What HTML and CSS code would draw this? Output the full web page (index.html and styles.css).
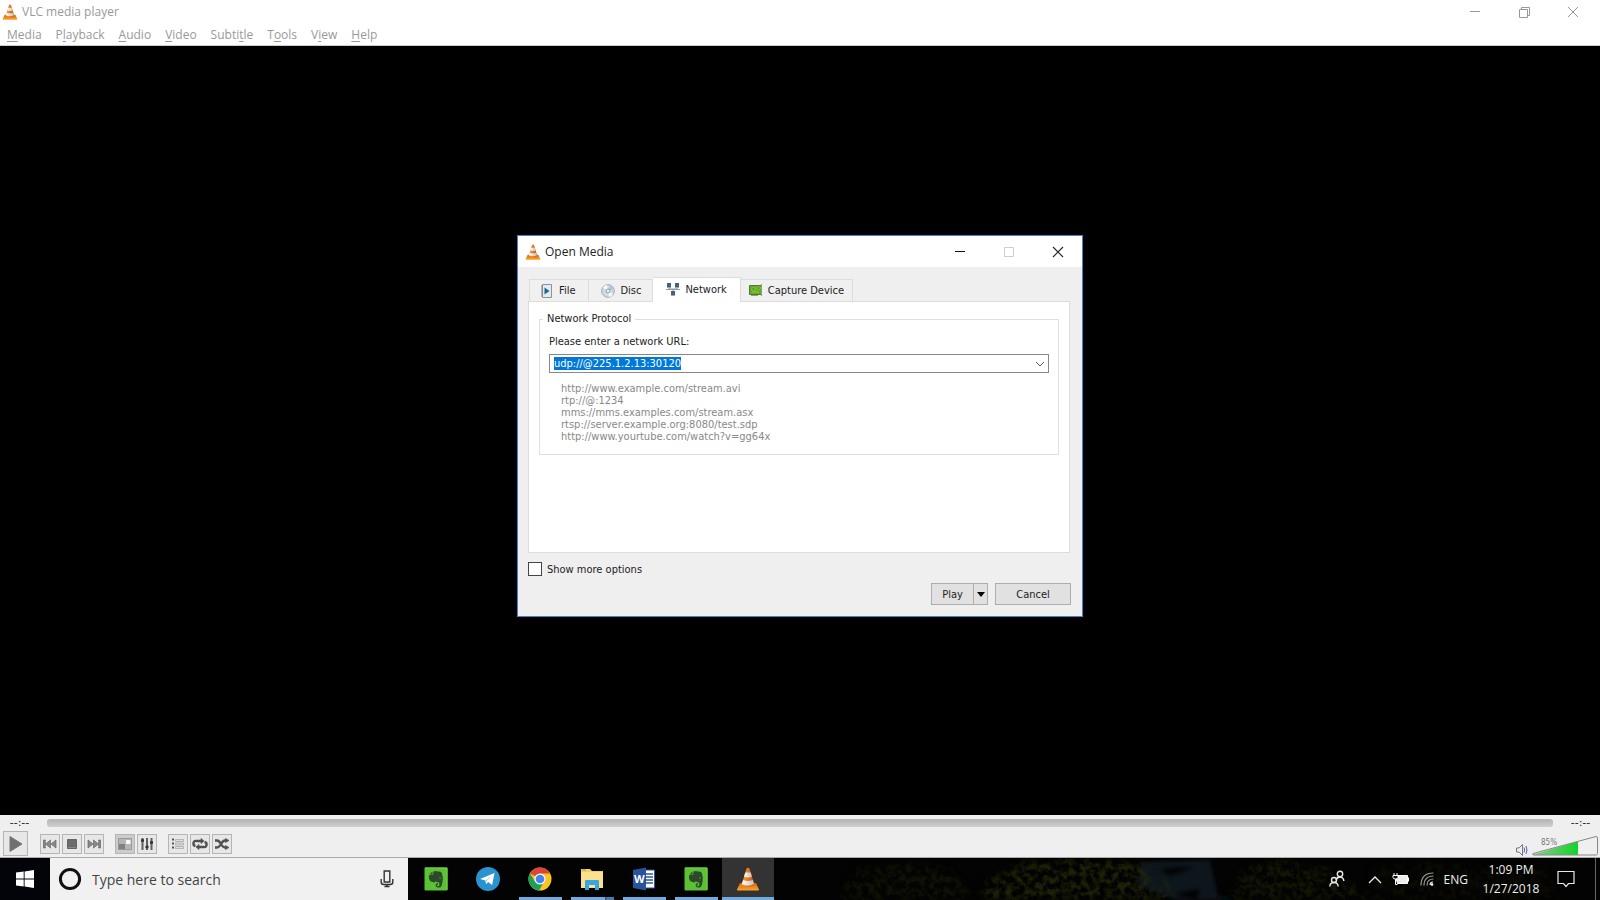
FILE: index.html
```html
<!DOCTYPE html>
<html lang="en">
<head>
<meta charset="utf-8">
<title>VLC media player</title>
<link rel="stylesheet" href="styles.css">
</head>
<body>
<svg class="defs" aria-hidden="true">
  <defs>
    <linearGradient id="orange" x1="0" x2="1" y1="0" y2="0">
      <stop offset="0" stop-color="#f8a13a"/><stop offset=".5" stop-color="#e87a10"/><stop offset="1" stop-color="#b9560a"/>
    </linearGradient>
    <linearGradient id="base" x1="0" x2="0" y1="0" y2="1">
      <stop offset="0" stop-color="#d9640a"/><stop offset="1" stop-color="#fba52c"/>
    </linearGradient>
    <linearGradient id="white" x1="0" x2="1" y1="0" y2="0">
      <stop offset="0" stop-color="#ffffff"/><stop offset="1" stop-color="#bdbdbd"/>
    </linearGradient>
    <linearGradient id="green" x1="0" x2="1" y1="0" y2="0">
      <stop offset="0" stop-color="#8ec98e"/><stop offset="1" stop-color="#12d42a"/>
    </linearGradient>
    <symbol id="cone" viewBox="0 0 24 24">
      <path d="M4 16h16l3 6.500q.2 1-1 1H2q-1.200 0-1-1z" fill="url(#base)"/>
      <path d="M10.500 1.500Q12 .2 13.500 1.500L18.500 18q-6.500 3.500-13 0z" fill="url(#orange)"/>
      <path d="M9.300 5.500h5.400l1.300 4.200q-4 1.600-8 0z" fill="url(#white)"/>
      <path d="M7.100 13q4.900 1.800 9.800 0l1.200 4q-6.100 3-12.200 0z" fill="url(#white)"/>
    </symbol>
    <symbol id="elephant" viewBox="0 0 24 24">
      <rect x=".5" y=".5" width="23" height="23" rx="1" fill="#5ac234"/>
      <path d="M1 1h22v22" fill="none" stroke="#7bd04a"/>
      <path d="M9.500 4.500Q12 3.300 14 4.600q3.200 0 3.900 1.300 1.400 4.600.6 9-.4 3.600-1.700 5-1.300 1-3.300.5-2.200-.6-1.900-2.600.4-1.800 2.300-1.700v1.700q-.9-.1-1 .7.200.8 1.300.7 1.300-.2 1.200-2.200-.1-1.500-1.300-1.700-1.500 0-2.200-1-.4 1.200-1.900 1.100-2.700-.2-4-1.600Q4.800 12.200 4.900 9q.1-.9 1.100-.9h2.400q.8 0 .8-.8z" fill="#2c4a2b"/>
      <path d="M5.500 7.400 8.500 4.500v2.900z" fill="#2c4a2b"/>
      <path d="M14.700 11.100q1.700-1.400 2.300.6-1.100-.5-2.300-.6z" fill="#6fc53f"/>
    </symbol>
  </defs>
</svg>

<div class="app">
  <header class="titlebar">
    <svg class="cone-small"><use href="#cone"/></svg>
    <h1 class="app-title">VLC media player</h1>
    <div class="window-buttons">
      <button class="win-btn" type="button" aria-label="Minimize"><svg width="12" height="12"><path d="M1 5.500h10" stroke="#999"/></svg></button>
      <button class="win-btn" type="button" aria-label="Restore"><svg width="12" height="12" fill="none" stroke="#999"><path d="M1.500 3.500h8v8h-8zM3.500 3V1.500h8v8H10"/></svg></button>
      <button class="win-btn" type="button" aria-label="Close"><svg width="12" height="12"><path d="M1 1l10 10M11 1L1 11" stroke="#999"/></svg></button>
    </div>
  </header>

  <nav class="menubar">
    <a href="#"><u>M</u>edia</a>
    <a href="#">P<u>l</u>ayback</a>
    <a href="#"><u>A</u>udio</a>
    <a href="#"><u>V</u>ideo</a>
    <a href="#">Subti<u>t</u>le</a>
    <a href="#">T<u>o</u>ols</a>
    <a href="#">V<u>i</u>ew</a>
    <a href="#"><u>H</u>elp</a>
  </nav>

  <main class="video">
    <section class="dialog" role="dialog" aria-labelledby="dlg-title">
      <header class="dialog-title">
        <svg class="cone-medium"><use href="#cone"/></svg>
        <h2 id="dlg-title">Open Media</h2>
        <div class="window-buttons dialog-buttons">
          <button class="win-btn" type="button" aria-label="Minimize"><svg width="12" height="12"><path d="M1 5.500h10" stroke="#111"/></svg></button>
          <button class="win-btn" type="button" aria-label="Maximize" disabled><svg width="12" height="12"><path d="M1.500 1.500h9v9h-9z" fill="none" stroke="#ccc"/></svg></button>
          <button class="win-btn" type="button" aria-label="Close"><svg width="12" height="12"><path d="M1 1l10 10M11 1L1 11" stroke="#222" stroke-width="1.100"/></svg></button>
        </div>
      </header>

      <div class="dialog-body">
        <div class="tabs" role="tablist">
          <button class="tab" role="tab" type="button">
            <svg width="14" height="14"><path d="M2.500.5h9v13h-9z" fill="#e4ebf0" stroke="#8b9298"/><path d="M2 1v12" stroke="#7b8288"/><path d="M4.500 3.500v7L9.500 7z" fill="#1d6591"/></svg>
            File</button>
          <button class="tab tab-disc" role="tab" type="button">
            <svg width="14" height="14"><circle cx="7" cy="7" r="6.300" fill="#d3dbe5" stroke="#a0a8b2"/><path d="M7 7 2 3.500A6 6 0 0 1 6 1zM7 7l5 3.500A6 6 0 0 1 8 13z" fill="#f6f9fc"/><path d="M7 7 9 1.300A6 6 0 0 1 12.500 5z" fill="#afc3dc"/><circle cx="7" cy="7" r="2" fill="#edf1f5" stroke="#8c9bac"/></svg>
            Disc</button>
          <button class="tab tab-active" role="tab" type="button" aria-selected="true">
            <svg width="14" height="14"><path d="M3 4v3h8V4M0 7.500h14M7 7v3" fill="none" stroke="#999"/><path d="M1 1h4v4H1zM9 1h4v4H9zM5 9h4v4H5z" fill="#3d6480"/><path d="M1 5.500h4M9 5.500h4M5 13.500h4" stroke="#9aa4ab"/></svg>
            Network</button>
          <button class="tab tab-capture" role="tab" type="button">
            <svg width="14" height="14"><path d="M.5 1.500h12v9H.5z" fill="#62ad24" stroke="#55743a"/><path d="M3 4h3v2H3zM8 3h3v2H8zM3 8h7" fill="#306b13" stroke="#9ddb4e" stroke-width=".7"/><path d="M12.500 0v12M2 11.500h7" stroke="#9b9b70"/></svg>
            Capture Device</button>
        </div>

        <div class="panel" role="tabpanel">
          <fieldset class="protocol">
            <legend>Network Protocol</legend>
            <label for="url">Please enter a network URL:</label>
            <div class="combo">
              <input id="url" type="text" value="udp://@225.1.2.13:30120" spellcheck="false" autocomplete="off">
              <button class="combo-arrow" type="button" aria-label="Recent addresses"><svg width="10" height="6"><path d="M1 1l4 4 4-4" fill="none" stroke="#555"/></svg></button>
            </div>
            <p class="examples">http://www.example.com/stream.avi<br>rtp://@:1234<br>mms://mms.examples.com/stream.asx<br>rtsp://server.example.org:8080/test.sdp<br>http://www.yourtube.com/watch?v=gg64x</p>
          </fieldset>
        </div>

        <label class="more"><input type="checkbox">Show more options</label>
        <div class="actions">
          <div class="split">
            <button class="btn play-btn" type="button">Play</button>
            <button class="btn drop-btn" type="button" aria-label="More play actions"><svg width="8" height="5"><path d="M0 0h8L4 5z"/></svg></button>
          </div>
          <button class="btn cancel-btn" type="button">Cancel</button>
        </div>
      </div>
    </section>
  </main>

  <footer class="controls">
    <div class="seek">
      <span class="time">--:--</span>
      <input class="seek-bar" type="range" aria-label="Position" disabled>
      <span class="time">--:--</span>
    </div>
    <div class="control-row">
      <button class="ctl ctl-play" type="button" aria-label="Play"><svg width="16" height="18"><path d="M2 1.500 14 9 2 16.500z" fill="#707070" stroke="#777"/></svg></button>
      <div class="ctl-group">
        <button class="ctl" type="button" aria-label="Previous"><svg width="14" height="10" fill="#888" stroke="#666" stroke-width=".7"><path d="M.5 1h1.800v8H.5zM7.500 1v8l-5-4zM13 1v8L8 5z"/></svg></button>
        <button class="ctl" type="button" aria-label="Stop"><svg width="12" height="12"><path d="M1.500 1.500h9v9h-9z" fill="#6c6c6c" stroke="#666"/><path d="M2 9.500h8" stroke="#888"/></svg></button>
        <button class="ctl" type="button" aria-label="Next"><svg width="14" height="10" fill="#888" stroke="#666" stroke-width=".7"><path d="M11.700 1h1.800v8h-1.800zM6.500 1v8l5-4zM1 1v8l5-4z"/></svg></button>
      </div>
      <div class="ctl-group">
        <button class="ctl ctl-pressed" type="button" aria-label="Fullscreen"><svg width="14" height="12"><path d="M.5.500h13v11H.5z" fill="#b5b5b5" stroke="#999"/><path d="M8 2h4.500v4H8z" fill="#f8f8f8"/><path d="M1 6h6v5H1z" fill="#808080"/></svg></button>
        <button class="ctl" type="button" aria-label="Extended settings"><svg width="14" height="14"><path d="M2.500 1v12M7 1v12M11.500 1v12" stroke="#606060" stroke-width="2"/><path d="M1 3.500h3M5.500 10h3M10 5.500h3" stroke="#333" stroke-width="2.500"/></svg></button>
      </div>
      <div class="ctl-group">
        <button class="ctl" type="button" aria-label="Playlist"><svg width="14" height="12"><path d="M1 1.500h2M1 5.500h2M1 9.500h2" stroke="#555" stroke-width="2"/><path d="M4.500 1.500h8v2h-8zM4.500 5h8v2h-8zM4.500 8.500h8v2h-8z" fill="#ddd" stroke="#aaa" stroke-width=".8"/></svg></button>
        <button class="ctl" type="button" aria-label="Loop"><svg width="16" height="12" fill="none" stroke="#505050" stroke-width="2.400"><path d="M3.500 8Q1 7.500 1.500 5t3-2H10M12.500 4q2.500.5 2 3t-3 2H6"/><path d="M9 .5 12 3 9 5.500zM7 6.500 4 9l3 2.500z" fill="#505050" stroke-width=".7"/></svg></button>
        <button class="ctl" type="button" aria-label="Random"><svg width="16" height="12" fill="none" stroke="#505050" stroke-width="2.400"><path d="M1 2.500h2q2 0 4 3.500t4 3.500h1M1 9.500h2q2 0 4-3.500t4-3.500h1"/><path d="M11.500.5 15 2.500l-3.500 2zM11.500 7.500l3.500 2-3.500 2z" fill="#505050" stroke-width=".7"/></svg></button>
      </div>
      <div class="volume">
        <svg width="14" height="14" fill="none"><path d="M1.500 5h2.500l3.500-3.500v11L4 9H1.500z" stroke="#777"/><path d="M9 4.500q1.200 2.500 0 5M11 3q2 4 0 8" stroke="#4a63bb"/></svg>
        <svg class="volume-scale" width="68" height="22" role="img" aria-label="Volume 85%"><path d="M2 19.500 47 6.200V20H2z" fill="url(#green)"/><path d="M2 18.500 65 1.500q1.500 0 1.500 1.500v15.500q0 1.500-1.500 1.500H3q-2 0-1-1.500z" fill="none" stroke="#888"/><text x="10" y="10" class="volume-text">85%</text></svg>
      </div>
    </div>
  </footer>

  <div class="taskbar">
    <svg class="wallpaper" viewBox="0 0 1600 42" preserveAspectRatio="none" aria-hidden="true">
      <filter id="leaves" x="0" y="0" width="100%" height="100%" color-interpolation-filters="sRGB">
        <feGaussianBlur in="SourceGraphic" stdDeviation="4" result="shape"/>
        <feTurbulence type="fractalNoise" baseFrequency=".16" numOctaves="3" seed="7"/>
        <feColorMatrix values="0 0 0 0 .15  0 0 0 0 .16  0 0 0 0 .03  3 0 0 0 -1.100"/>
        <feComposite in2="shape" operator="in"/>
      </filter>
      <filter id="soft"><feGaussianBlur stdDeviation="2"/></filter>
      <path d="M1140 4l70-2 8 36 20 4h-60l-40-14z" fill="#11171b" filter="url(#soft)"/>
      <path d="M1160 12q20-4 34-2l-24 7zM1175 36l25-5-4 11z" fill="#040506" filter="url(#soft)"/>
      <g filter="url(#leaves)">
        <path d="M840 42l14-30 60-8 40 10 20 28z" opacity=".4"/>
        <path d="M982 42l4-18 40-20 60-4 60 6 8 36zM1155 42l8-22 8 10 2 12z" opacity=".8"/>
        <path d="M1230 42l12-30 30-10 60 8 40 32z" opacity=".5"/>
        <path d="M1372 42V10l60-8 70 10 40-8 20 38z" opacity=".25"/>
      </g>
    </svg>
    <button class="start" type="button" aria-label="Start"><svg width="18" height="18" fill="#fff"><path d="M0 2.600 7.700 1.500v7H0zM8.600 1.400 18 0v8.500H8.600zM0 9.400h7.700v7L0 15.400zM8.600 9.400H18V18l-9.400-1.400z"/></svg></button>
    <label class="search">
      <svg width="24" height="24"><circle cx="12" cy="12" r="9.600" fill="none" stroke="#111" stroke-width="3"/></svg>
      <input type="text" placeholder="Type here to search" aria-label="Type here to search">
      <svg width="14" height="18" fill="none" stroke="#333" stroke-width="1.400"><path d="M4.200 1h5.600v11H4.200zM1.200 9v3q0 2.500 2.500 2.500h6.600q2.500 0 2.500-2.500V9M7 14.500V17M4.500 16.500h5"/></svg>
    </label>
    <div class="apps">
      <button class="app-btn" type="button" aria-label="Evernote"><svg width="24" height="24"><use href="#elephant"/></svg></button>
      <button class="app-btn" type="button" aria-label="Telegram"><svg width="24" height="24"><circle cx="12" cy="12" r="12" fill="#2a92cf"/><path d="M4 12 18.500 6l-2.400 12-4-3-2 2.200-.7-3.700z" fill="#fff"/><path d="M9.400 13.500 16.500 8l-5.800 6.300-.6 2.900z" fill="#b9d4e6"/></svg></button>
      <button class="app-btn running" type="button" aria-label="Chrome"><svg width="24" height="24"><circle cx="12" cy="12" r="11.500" fill="#f8c524"/><path d="M12 12 2 6.200A11.500 11.500 0 0 1 22 6.500H12z" fill="#dc4437"/><path d="M2 6.200A11.500 11.500 0 0 0 11 23.500L16.500 14 12 12 7 14.500z" fill="#219d58"/><circle cx="12" cy="12" r="5.600" fill="#f4f4f4"/><circle cx="12" cy="12" r="4.300" fill="#4385ef"/></svg></button>
      <button class="app-btn running stacked" type="button" aria-label="File Explorer"><svg width="24" height="24"><path d="M1 2h9l2 2h11v17H1z" fill="#f3ce6a"/><path d="M2 2.500h4v1H2z" fill="#8aa862"/><path d="M1 5h22v16H1z" fill="#fbe08e"/><path d="M5 23v-9q0-1 1-1h12q1 0 1 1v9h-4v-5H9v5z" fill="#37a6df"/></svg></button>
      <button class="app-btn running" type="button" aria-label="Word"><svg width="24" height="24"><path d="M12 3h10.500v18H12z" fill="#fff" stroke="#2b579a"/><path d="M14 7h7M14 10h7M14 13h7M14 16h7" stroke="#2b579a" stroke-width="1.500"/><path d="M1 3 14 .5v23L1 21z" fill="#27549b"/><text x="2" y="16" class="word-letter">W</text></svg></button>
      <button class="app-btn running" type="button" aria-label="Evernote window"><svg width="24" height="24"><use href="#elephant"/></svg></button>
      <button class="app-btn running current" type="button" aria-label="VLC media player"><svg width="24" height="24"><use href="#cone"/></svg></button>
    </div>
    <div class="tray">
      <button class="tray-btn people" type="button" aria-label="People"><svg width="18" height="18" fill="none" stroke="#e8e8e8" stroke-width="1.400"><circle cx="12" cy="4" r="2.700"/><path d="M8 10q1-3 4-3t4 4"/><circle cx="6" cy="10" r="2.500"/><path d="M1.800 16.500Q2 12.500 6 12.500t4.200 4"/></svg></button>
      <button class="tray-btn" type="button" aria-label="Show hidden icons"><svg width="14" height="9"><path d="M1 8l6-6 6 6" fill="none" stroke="#e8e8e8" stroke-width="1.400"/></svg></button>
      <button class="tray-btn" type="button" aria-label="Battery"><svg width="18" height="14"><path d="M4.500 3.500h11v8h-11z" fill="#eee" stroke="#fff"/><path d="M16.500 5.500v4" stroke="#fff"/><path d="M1 3.500h5v2q0 1.500-2.500 1.500T1 5.500zM2 1v2M5 1v2M3.500 7v5.500h2" fill="#111" stroke="#fff"/></svg></button>
      <button class="tray-btn" type="button" aria-label="Wireless network"><svg width="14" height="14" fill="none" stroke="#999" stroke-width="1.200"><path d="M1 13.500Q1 1 13.500 1M4 13.500Q4 4 13.500 4M7 13.500Q7 7 13.500 7"/><path d="M10 13q0-3 3-3" stroke="#eee"/><circle cx="12" cy="12.500" r="1.300" fill="#fff" stroke="none"/></svg></button>
      <span class="lang">ENG</span>
      <div class="clock"><time>1:09 PM</time><time>1/27/2018</time></div>
      <button class="tray-btn" type="button" aria-label="Notifications"><svg width="18" height="18"><path d="M1 1.500h16v12h-5.500L9 16.500 6.500 13.500H1z" fill="none" stroke="#e8e8e8" stroke-width="1.200"/></svg></button>
      <span class="peek"></span>
    </div>
  </div>
</div>
<script src="app.js"></script>
</body>
</html>
```

FILE: styles.css
```css
* { box-sizing: border-box; }
html, body { height: 100%; margin: 0; }
body { font-family: "Open Sans", "Noto Sans", sans-serif; background: #000; overflow: hidden; }
button { font: inherit; color: inherit; border: 0; background: none; padding: 0; margin: 0; }
input { font: inherit; color: inherit; margin: 0; }
svg { display: block; flex: none; }
h1, h2, p { margin: 0; font-weight: 400; }
.defs { position: absolute; width: 0; height: 0; }

.app { display: flex; flex-direction: column; min-height: 100vh; }

/* Main window */
.titlebar { display: flex; align-items: center; height: 24px; padding: 0 3px 0 2px; background: #fff; color: #999; }
.cone-small { width: 16px; height: 18px; margin-right: 4px; }
.cone-medium { width: 16px; height: 18px; margin-right: 4px; }
.app-title { font-size: 12px; line-height: 24px; }
.window-buttons { display: flex; margin-left: auto; }
.win-btn { display: grid; place-items: center; width: 49px; height: 24px; }

.menubar { display: flex; gap: 14px; height: 22px; padding-left: 7px; background: #fff; border-bottom: 1px solid #ccc; font-size: 12px; line-height: 21px; }
.menubar a { color: #999; text-decoration: none; }
.menubar u { text-underline-offset: 2px; }

.video { flex: 1; display: grid; place-items: center; padding-bottom: 9px; background: #000; }

/* Open Media dialog */
.dialog { width: 566px; max-width: 100%; background: #efefef; border: 1px solid #3f86c8; font-family: "DejaVu Sans Condensed", "DejaVu Sans", sans-serif; font-size: 11px; color: #222; }
.dialog-title { display: flex; align-items: center; height: 31px; padding-left: 7px; background: #fff; font-family: "Open Sans", "Noto Sans", sans-serif; }
.dialog-title h2 { font-size: 12px; }
.dialog-body { padding: 10px 12px 11px 10px; }
.tabs { display: flex; align-items: flex-end; height: 24px; padding-left: 1px; }
.tab { display: flex; align-items: center; gap: 5px; height: 22px; padding: 0 13px 0 10px; background: #f0f0f0; border: 1px solid #dcdcdc; border-left-width: 0; border-bottom: 0; }
.tab:first-child { border-left-width: 1px; }
.tab-disc { padding-left: 12px; padding-right: 11px; }
.tab-capture { padding: 0 8px; }
.tab-active { height: 25px; margin-bottom: -1px; padding: 0 13px 2px; background: #fff; z-index: 1; }
.panel { height: 252px; padding: 10px; background: #fff; border: 1px solid #dcdcdc; }
.protocol { margin: 0; min-width: 0; padding: 8px 9px 11px; border: 1px solid #dfdfdf; }
.protocol legend { padding: 0 4px; margin-left: -6px; line-height: 14px; }
.protocol label { display: block; line-height: 16px; margin-bottom: 4px; }
.combo { display: flex; align-items: center; height: 19px; border: 1px solid #888; background: #fff; }
.combo input { flex: 1; min-width: 0; height: 15px; padding: 0 4px; border: 0; outline: 0; background: none; line-height: 14px; }
.combo input::selection { background: #0078d7; color: #fff; }
.combo-arrow { padding: 0 3px; }
.examples { margin: 10px 0 0 12px; line-height: 12px; color: #888; }
.more { display: inline-flex; align-items: center; gap: 5px; margin-top: 8px; height: 16px; }
.more input { appearance: none; width: 14px; height: 14px; border: 1px solid #444; background: #fff; }
.actions { display: flex; justify-content: flex-end; gap: 7px; margin: 4px -1px 0 0; }
.split { display: flex; }
.btn { height: 22px; background: #e1e1e1; border: 1px solid #adadad; }
.play-btn { width: 43px; }
.drop-btn { display: grid; place-items: center; width: 14px; border-left: 0; }
.cancel-btn { width: 76px; }

/* Player controls */
.controls { height: 43px; background: #efefef; border-bottom: 1px solid #aaa; }
.seek { display: flex; align-items: center; height: 15px; padding: 0 8px; gap: 16px; }
.time { width: 23px; font: 11px/14px "DejaVu Sans", sans-serif; text-align: center; color: #222; }
.seek-bar { appearance: none; flex: 1; min-width: 0; height: 8px; border-radius: 3px; background: linear-gradient(#b3b3b3, #cfcfcf); }
.seek-bar::-webkit-slider-thumb { appearance: none; width: 0; height: 0; }
.control-row { display: flex; align-items: center; gap: 11px; height: 27px; padding-left: 3px; }
.ctl { display: grid; place-items: center; width: 20px; height: 20px; background: #e7e7e7; border: 1px solid #b5b5b5; }
.ctl-play { width: 25px; height: 25px; margin-right: 1px; }
.ctl-pressed { background: #ccc; }
.ctl-group { display: flex; gap: 2px; }
.volume { display: flex; align-items: flex-end; align-self: flex-end; gap: 2px; margin-left: auto; padding-right: 1px; }
.volume-text { font: 8px "DejaVu Sans Condensed", "DejaVu Sans", sans-serif; fill: #777; }

/* Taskbar */
.taskbar { position: relative; display: flex; height: 42px; background: #020302; color: #eee; }
.wallpaper { position: absolute; inset: 0; width: 100%; height: 100%; }
.start { display: grid; place-items: center; width: 50px; background: #02040a; z-index: 1; }
.search { display: flex; align-items: center; width: 358px; padding: 0 14px 0 8px; background: #f1f1f1; color: #444; z-index: 1; }
.search input { flex: 1; min-width: 0; padding: 0 10px; border: 0; outline: 0; background: none; font-size: 14px; }
.search input::placeholder { color: #444; opacity: 1; }
.apps { display: flex; margin-left: 2px; z-index: 1; }
.app-btn { display: grid; place-items: center; width: 52px; height: 42px; }
.running { background: linear-gradient(#72abdf, #72abdf) center bottom / 43px 3px no-repeat; }
.stacked { background: linear-gradient(90deg, #72abdf 34px, #28435c 34px, #4d7ba5 36px) center bottom / 43px 3px no-repeat; }
.current { background: linear-gradient(#72abdf, #72abdf) center bottom / 100% 3px no-repeat, #333; }
.word-letter { font: bold 11px "Open Sans", sans-serif; fill: #fff; }
.tray { display: flex; align-items: center; gap: 10px; margin-left: auto; padding-right: 4px; z-index: 1; }
.people { margin-right: 12px; }
.lang { font-size: 12px; }
.clock { display: flex; flex-direction: column; width: 66px; margin-right: 3px; font-size: 12px; line-height: 19px; text-align: center; }
.peek { width: 1px; height: 42px; margin-left: 10px; background: #666; }
```

FILE: app.js
```js
const url = document.getElementById("url");
url.focus();
url.select();
```
